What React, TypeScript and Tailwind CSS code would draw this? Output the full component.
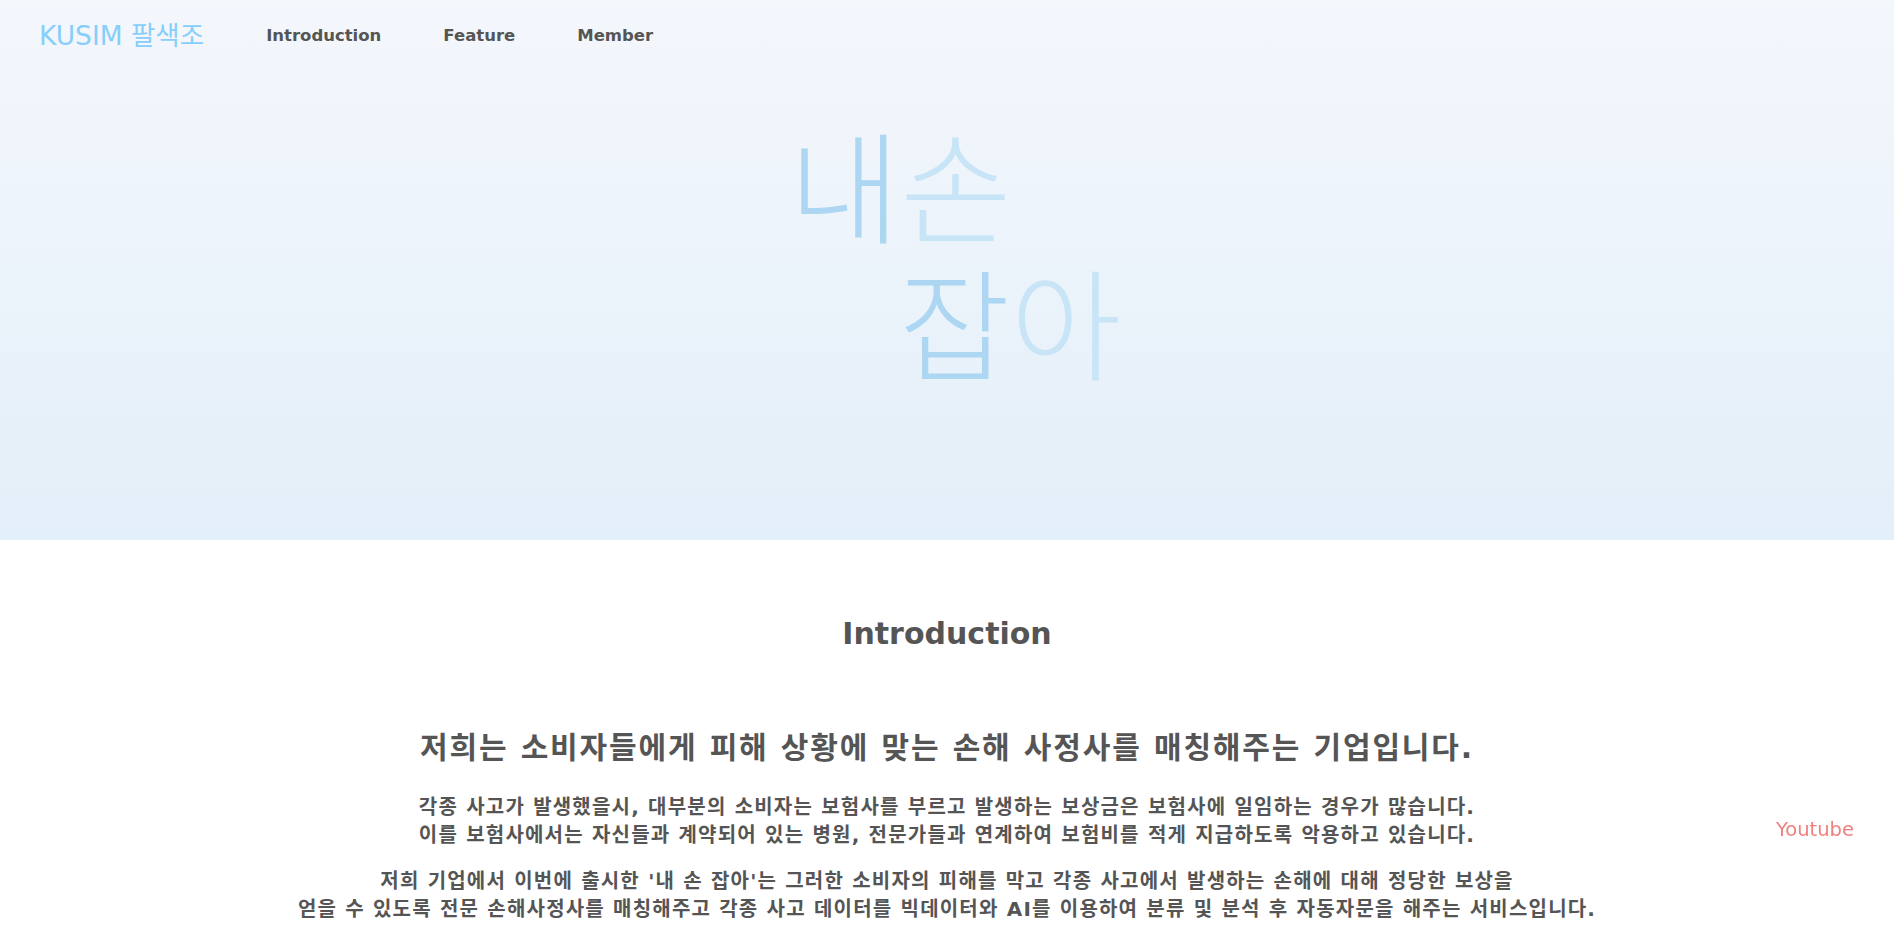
import React from "react";

const navItems = ["Introduction", "Feature", "Member"];

export default function App() {
  return (
    <div className="min-h-screen bg-white font-['DejaVu_Sans','Noto_Sans_CJK_KR',sans-serif] text-[#555]">
      <header className="h-[540px] bg-gradient-to-b from-[#f4f7fc] to-[#e3eff9]">
        <nav className="flex h-[72px] items-center gap-[62px] px-[39px]">
          <a className="text-[26.5px] text-[#87cefa]">KUSIM 팔색조</a>
          {navItems.map((item) => (
            <a key={item} className="text-[16.5px] font-bold text-[#555]">
              {item}
            </a>
          ))}
        </nav>

        <div className="flex justify-center pt-[41px] pl-[16px]">
          <div className="font-['Noto_Sans_CJK_KR',sans-serif] text-[121px] font-light leading-[137px]">
            <div>
              <span className="text-[#acd6f2]">내</span>
              <span className="text-[#c8e4f7]">손</span>
            </div>
            <div className="pl-[110px]">
              <span className="text-[#acd6f2]">잡</span>
              <span className="text-[#c8e4f7]">아</span>
            </div>
          </div>
        </div>
      </header>

      <section className="flex flex-col items-center pb-16 text-center">
        <h1 className="mt-[76px] text-[30px] font-bold leading-[36px]">Introduction</h1>
        <h2 className="mt-[78px] text-[30px] font-bold leading-[36px] tracking-[1.85px]">
          저희는 소비자들에게 피해 상황에 맞는 손해 사정사를 매칭해주는 기업입니다.
        </h2>
        <p className="mt-[27px] text-[20px] font-bold leading-7 tracking-[1.2px]">
          각종 사고가 발생했을시, 대부분의 소비자는 보험사를 부르고 발생하는 보상금은 보험사에 일임하는 경우가 많습니다.
          <br />
          이를 보험사에서는 자신들과 계약되어 있는 병원, 전문가들과 연계하여 보험비를 적게 지급하도록 악용하고 있습니다.
        </p>
        <p className="mt-[18px] text-[20px] font-bold leading-7 tracking-[1.2px]">
          저희 기업에서 이번에 출시한 '내 손 잡아'는 그러한 소비자의 피해를 막고 각종 사고에서 발생하는 손해에 대해 정당한 보상을
          <br />
          얻을 수 있도록 전문 손해사정사를 매칭해주고 각종 사고 데이터를 빅데이터와 AI를 이용하여 분류 및 분석 후 자동자문을 해주는 서비스입니다.
        </p>
      </section>

      <a className="fixed right-[40px] top-[815px] text-[19.5px] text-[#f08080]">Youtube</a>
    </div>
  );
}
